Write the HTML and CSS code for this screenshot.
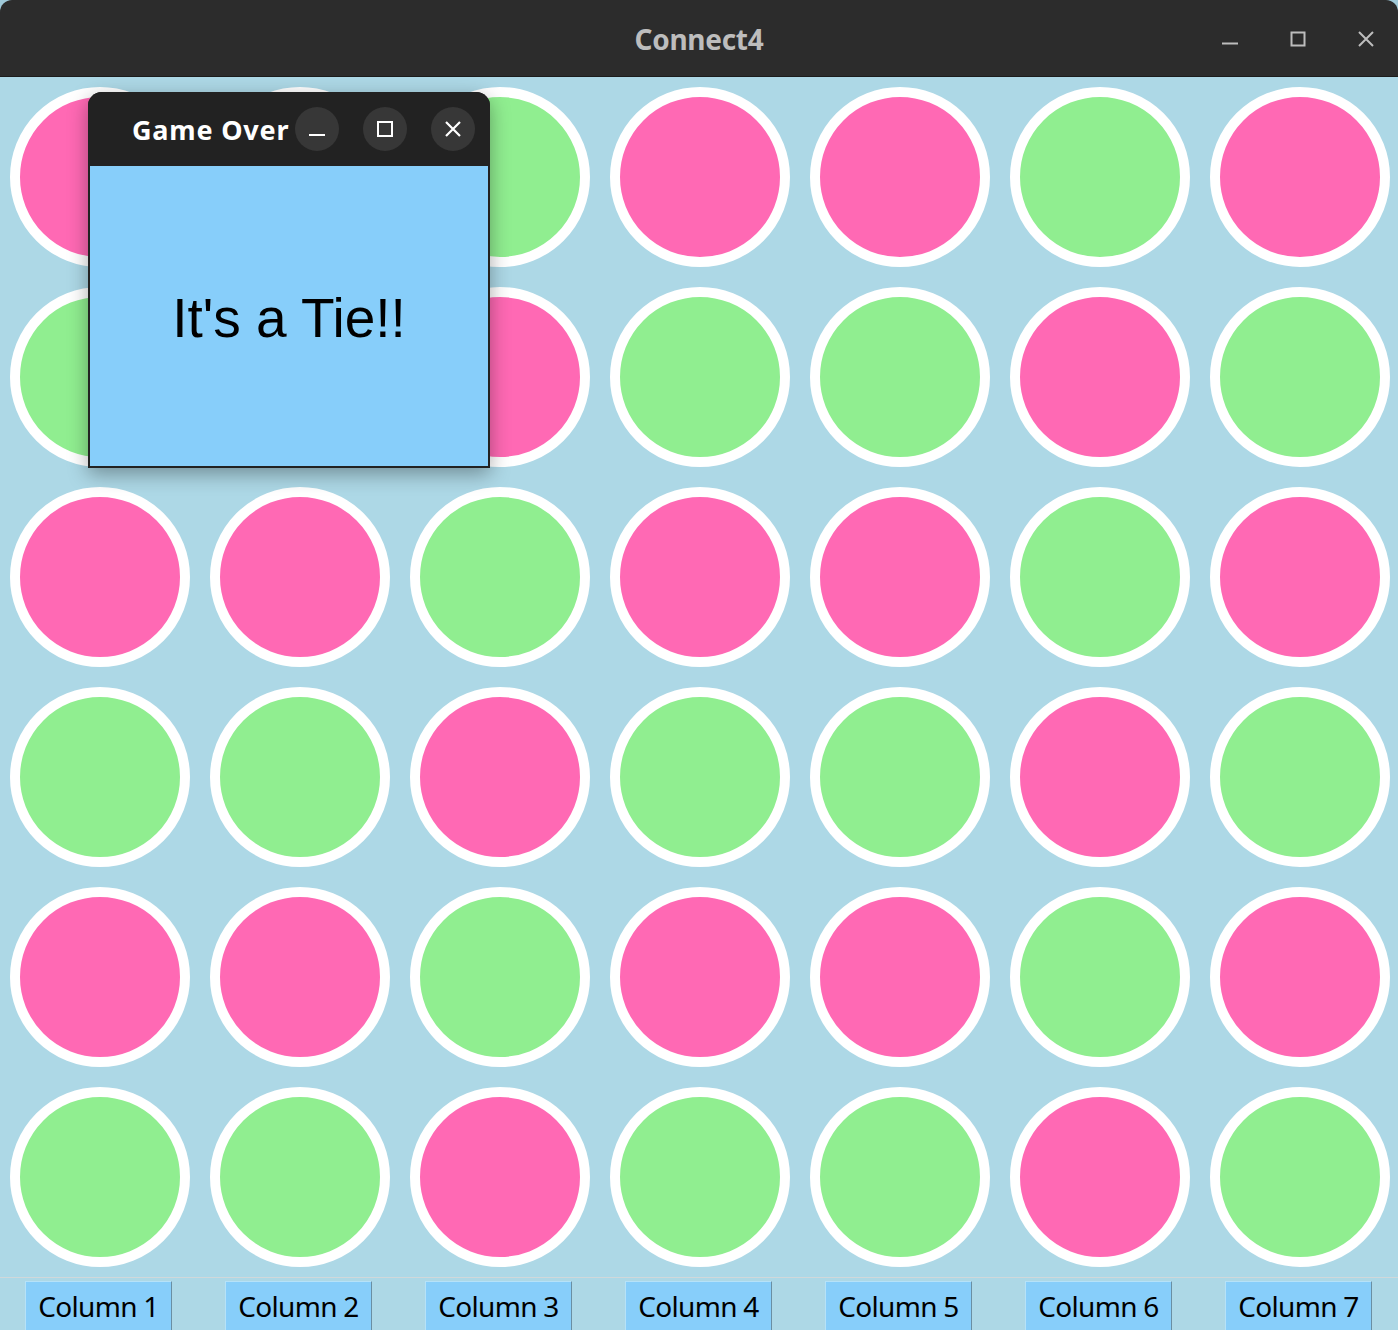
FILE: index.html
```html
<!DOCTYPE html>
<html>
<head>
<meta charset="utf-8">
<link rel="stylesheet" href="styles.css">
</head>
<body>
<div class="window">
  <header class="titlebar">
    <span class="title">Connect4</span>
    <div class="controls">
      <svg class="ctl" width="20" height="20" viewBox="0 0 20 20"><line x1="2" y1="14.5" x2="18" y2="14.5" stroke="#bdbdbd" stroke-width="2"/></svg>
      <svg class="ctl" width="20" height="20" viewBox="0 0 20 20"><rect x="3.5" y="3.5" width="13" height="13" fill="none" stroke="#bdbdbd" stroke-width="2"/></svg>
      <svg class="ctl" width="20" height="20" viewBox="0 0 20 20"><path d="M3 3 L17 17 M17 3 L3 17" stroke="#bdbdbd" stroke-width="2"/></svg>
    </div>
  </header>
  <main class="board">
    <div class="cell"><div class="disc pink"></div></div>
    <div class="cell"><div class="disc pink"></div></div>
    <div class="cell"><div class="disc green"></div></div>
    <div class="cell"><div class="disc pink"></div></div>
    <div class="cell"><div class="disc pink"></div></div>
    <div class="cell"><div class="disc green"></div></div>
    <div class="cell"><div class="disc pink"></div></div>

    <div class="cell"><div class="disc green"></div></div>
    <div class="cell"><div class="disc green"></div></div>
    <div class="cell"><div class="disc pink"></div></div>
    <div class="cell"><div class="disc green"></div></div>
    <div class="cell"><div class="disc green"></div></div>
    <div class="cell"><div class="disc pink"></div></div>
    <div class="cell"><div class="disc green"></div></div>

    <div class="cell"><div class="disc pink"></div></div>
    <div class="cell"><div class="disc pink"></div></div>
    <div class="cell"><div class="disc green"></div></div>
    <div class="cell"><div class="disc pink"></div></div>
    <div class="cell"><div class="disc pink"></div></div>
    <div class="cell"><div class="disc green"></div></div>
    <div class="cell"><div class="disc pink"></div></div>

    <div class="cell"><div class="disc green"></div></div>
    <div class="cell"><div class="disc green"></div></div>
    <div class="cell"><div class="disc pink"></div></div>
    <div class="cell"><div class="disc green"></div></div>
    <div class="cell"><div class="disc green"></div></div>
    <div class="cell"><div class="disc pink"></div></div>
    <div class="cell"><div class="disc green"></div></div>

    <div class="cell"><div class="disc pink"></div></div>
    <div class="cell"><div class="disc pink"></div></div>
    <div class="cell"><div class="disc green"></div></div>
    <div class="cell"><div class="disc pink"></div></div>
    <div class="cell"><div class="disc pink"></div></div>
    <div class="cell"><div class="disc green"></div></div>
    <div class="cell"><div class="disc pink"></div></div>

    <div class="cell"><div class="disc green"></div></div>
    <div class="cell"><div class="disc green"></div></div>
    <div class="cell"><div class="disc pink"></div></div>
    <div class="cell"><div class="disc green"></div></div>
    <div class="cell"><div class="disc green"></div></div>
    <div class="cell"><div class="disc pink"></div></div>
    <div class="cell"><div class="disc green"></div></div>
  </main>
  <footer class="buttons">
    <div class="slot"><button class="colbtn">Column 1</button></div>
    <div class="slot"><button class="colbtn">Column 2</button></div>
    <div class="slot"><button class="colbtn">Column 3</button></div>
    <div class="slot"><button class="colbtn">Column 4</button></div>
    <div class="slot"><button class="colbtn">Column 5</button></div>
    <div class="slot"><button class="colbtn">Column 6</button></div>
    <div class="slot"><button class="colbtn">Column 7</button></div>
  </footer>
</div>

<div class="dialog">
  <div class="dlg-bar">
    <span class="dlg-title">Game Over</span>
    <span class="dlg-btn dlg-min"><svg width="20" height="20" viewBox="0 0 20 20"><line x1="2" y1="16" x2="18" y2="16" stroke="#fff" stroke-width="2"/></svg></span>
    <span class="dlg-btn dlg-max"><svg width="20" height="20" viewBox="0 0 20 20"><rect x="3" y="3" width="14" height="14" fill="none" stroke="#fff" stroke-width="2"/></svg></span>
    <span class="dlg-btn dlg-close"><svg width="20" height="20" viewBox="0 0 20 20"><path d="M3 3 L17 17 M17 3 L3 17" stroke="#fff" stroke-width="2.2"/></svg></span>
  </div>
  <div class="dlg-body">It's a Tie!!</div>
</div>
</body>
</html>
```

FILE: styles.css
```css
html, body {
  margin: 0;
  padding: 0;
}
body {
  width: 1398px;
  height: 1330px;
  overflow: hidden;
  background: #9fc9d8;
  position: relative;
  font-family: "Noto Sans", "DejaVu Sans", sans-serif;
}
.window {
  display: flex;
  flex-direction: column;
  width: 1398px;
  height: 1330px;
  background: #add8e6;
  border-radius: 12px 12px 0 0;
  overflow: hidden;
}
.titlebar {
  height: 76px;
  flex: none;
  background: #2c2c2c;
  border-bottom: 1px solid #1c1c1c;
  position: relative;
  display: flex;
  align-items: center;
  justify-content: center;
}
.title {
  color: #bdbdbd;
  font-weight: 700;
  font-size: 28px;
  letter-spacing: -0.3px;
  margin-top: 2px;
}
.controls {
  position: absolute;
  right: 22px;
  top: 29px;
  display: flex;
  gap: 48px;
}
.ctl {
  display: block;
}
.board {
  display: grid;
  grid-template-columns: repeat(7, 200px);
  grid-template-rows: repeat(6, 200px);
  flex: none;
}
.cell {
  display: flex;
  align-items: center;
  justify-content: center;
}
.disc {
  width: 160px;
  height: 160px;
  border-radius: 50%;
  border: 10px solid #ffffff;
}
.pink { background: #ff69b4; }
.green { background: #90ee90; }
.buttons {
  flex: 1;
  display: grid;
  grid-template-columns: repeat(7, 200px);
  border-top: 1px solid #d0d8da;
}
.slot {
  padding-left: 25px;
  padding-top: 3px;
}
.colbtn {
  width: 147px;
  height: 60px;
  background: #87cefa;
  border: none;
  border-left: 1px solid #b6e2f8;
  border-top: 1px solid #b6e2f8;
  border-right: 1px solid #6a8fa3;
  padding: 0 0 12px 0;
  font-family: "Noto Sans", "DejaVu Sans", sans-serif;
  font-size: 28px;
  color: #000;
  letter-spacing: -0.7px;
  text-align: center;
}
.dialog {
  position: absolute;
  left: 88px;
  top: 92px;
  width: 402px;
  height: 376px;
  display: flex;
  flex-direction: column;
  border-radius: 14px 14px 0 0;
  box-shadow: 0 6px 20px rgba(0, 0, 0, 0.35);
  overflow: hidden;
  background: #222222;
}
.dlg-bar {
  height: 74px;
  flex: none;
  background: #222222;
  display: flex;
  align-items: center;
  padding-left: 44px;
  position: relative;
}
.dlg-title {
  color: #ffffff;
  font-weight: 700;
  font-size: 27px;
  letter-spacing: 0.8px;
}
.dlg-btn {
  position: absolute;
  top: 15px;
  width: 44px;
  height: 44px;
  border-radius: 50%;
  background: #373737;
  display: flex;
  align-items: center;
  justify-content: center;
}
.dlg-btn svg { display: block; }
.dlg-min { left: 207px; }
.dlg-max { left: 275px; }
.dlg-close { left: 343px; }
.dlg-body {
  flex: 1;
  background: #87cefa;
  border: 2px solid #222222;
  border-top: none;
  display: flex;
  align-items: center;
  justify-content: center;
  font-family: "Liberation Sans", Arial, sans-serif;
  font-size: 55px;
  color: #000;
  padding-top: 4px;
}
```
